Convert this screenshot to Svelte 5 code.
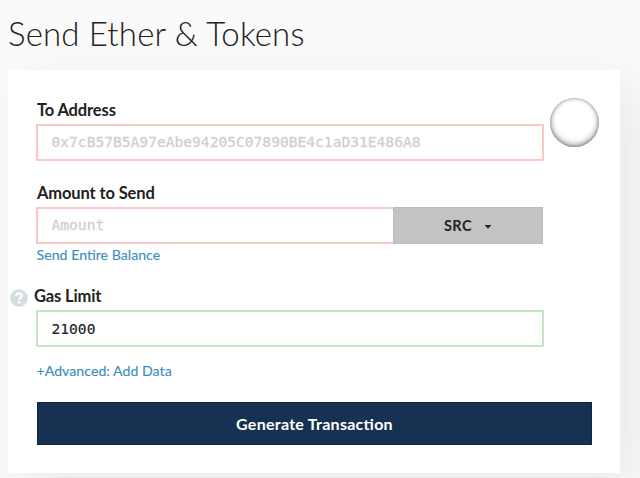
<script>
  let address = $state('');
  let amount = $state('');
  let gas = $state('21000');
</script>

<main>
  <h1>Send Ether &amp; Tokens</h1>
  <section class="card">
    <div class="row">
      <div class="field address">
        <label for="to">To Address</label>
        <input id="to" class="invalid" bind:value={address} placeholder="0x7cB57B5A97eAbe94205C07890BE4c1aD31E486A8" />
      </div>
      <div class="identicon"></div>
    </div>

    <div class="field amount">
      <label for="amount">Amount to Send</label>
      <div class="group">
        <input id="amount" class="invalid" bind:value={amount} placeholder="Amount" />
        <button class="unit">SRC
          <svg width="8" height="4" viewBox="0 0 8 4"><path d="M.5 0h7L4 3.8z" fill="#222" /></svg>
        </button>
      </div>
      <a href="#all">Send Entire Balance</a>
    </div>

    <div class="field gas">
      <div class="labelrow">
        <svg class="help" width="18" height="18" viewBox="0 0 18 18">
          <circle cx="9" cy="9" r="8.8" fill="#d4dee0" />
          <path d="M6.2 7C6.3 3.5 11.9 3.6 11.8 6.9C11.7 8.8 9.2 8.7 9.2 10.9" fill="none" stroke="#fff" stroke-width="2.2" />
          <circle cx="9.2" cy="13.3" r="1.3" fill="#fff" />
        </svg>
        <label for="gas">Gas Limit</label>
      </div>
      <input id="gas" class="valid" bind:value={gas} />
    </div>

    <a class="advanced" href="#data">+Advanced: Add Data</a>
    <button class="submit">Generate Transaction</button>
  </section>
</main>

<style>
  :global(body) { background: #fafafa; overflow: hidden; }
  main {
    box-sizing: border-box;
    width: 640px;
    height: 478px;
    padding: 13px 20px 0 8px;
    overflow: hidden;
    font-family: Lato, sans-serif;
    color: #222;
  }
  h1 {
    margin: 0;
    height: 57px;
    font-size: 33px;
    line-height: 41px;
    font-weight: 300;
    letter-spacing: 0.17px;
    white-space: nowrap;
  }
  .card {
    box-sizing: border-box;
    width: 612px;
    height: 403px;
    padding: 28px 28px 0;
    background: #fff;
    box-shadow: 16px 16px 47px 0 rgba(0, 0, 0, 0.07);
  }
  .row { display: flex; gap: 6px; height: 83px; }
  .field { display: flex; flex-direction: column; width: 508px; flex: none; }
  label {
    height: 26px;
    padding-left: 1px;
    line-height: 24px;
    font-size: 16.5px;
    font-weight: 700;
    letter-spacing: -0.13px;
  }
  input {
    box-sizing: border-box;
    width: 508px;
    height: 37px;
    margin: 0;
    padding: 0 14px 2px 13.5px;
    border: 2px solid #f8cac7;
    border-radius: 1px;
    outline: none;
    background: #fff;
    color: #222;
    font: 14.6px 'DejaVu Sans Mono', monospace;
    -webkit-text-stroke: 0.15px currentColor;
  }
  input::placeholder { color: #cfcfcf; opacity: 1; -webkit-text-stroke: 0.3px #cfcfcf; }
  .valid { border-color: #c2e7c5; padding-bottom: 0; }
  .identicon {
    flex: none;
    width: 49px;
    height: 49px;
    border-radius: 50%;
    background: #fff;
    box-shadow: inset 0 -2px 6px rgba(0, 0, 0, 0.45), inset 0 0 3px rgba(0, 0, 0, 0.35);
  }
  .group { display: flex; height: 37px; }
  .group input { width: 357px; border-right: 0; }
  .unit {
    display: flex;
    align-items: center;
    justify-content: center;
    gap: 12px;
    width: 150px;
    height: 37px;
    padding: 0;
    border: 1px solid #bcbcbc;
    background: #c3c3c3;
    color: #222;
    font: 700 14.5px Lato, sans-serif;
    letter-spacing: 0.5px;
  }
  .unit svg { margin-top: 3px; }
  a {
    padding-left: 0.5px;
    color: #3c8fbd;
    font-size: 14.2px;
    line-height: 22px;
    text-decoration: none;
    -webkit-text-stroke: 0.15px currentColor;
  }
  .amount { height: 104px; }
  .gas { height: 75px; }
  .labelrow { display: flex; gap: 5px; height: 25px; margin-left: -26px; }
  .labelrow label { line-height: 22px; }
  .help { margin-top: 4px; }
  .advanced { display: block; height: 42px; }
  .submit {
    display: block;
    width: 555px;
    height: 43px;
    margin-left: 1px;
    padding: 0 0 1px;
    border: 1px solid #0b2545;
    background: #163151;
    color: #fff;
    font: 700 16px Lato, sans-serif;
    font-feature-settings: 'liga' 1;
    letter-spacing: 0.27px;
  }
</style>
